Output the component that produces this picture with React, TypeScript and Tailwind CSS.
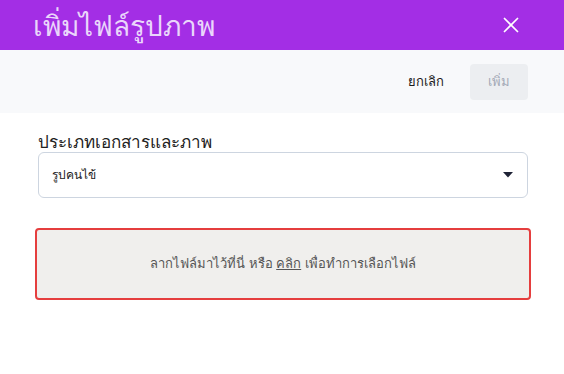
import { X } from "lucide-react";

export default function App() {
  return (
    <div className="flex h-[374px] w-[564px] flex-col bg-white font-['Noto_Sans',sans-serif]">
      {/* Header */}
      <div className="flex h-[50px] items-center justify-between bg-[#a32ee5] pl-[33px] pr-[40px]">
        <h1 className="text-[28px] leading-none text-[#ead6fb]">เพิ่มไฟล์รูปภาพ</h1>
        <X className="h-[26px] w-[26px] text-white" strokeWidth={1.6} />
      </div>

      {/* Actions bar */}
      <div className="flex h-[63px] items-center justify-end gap-[26px] bg-[#f8f9fb] pr-[36px]">
        <button className="text-[13px] font-medium text-[#1a1a1a]">ยกเลิก</button>
        <button className="flex h-[36px] w-[58px] items-center justify-center rounded-[4px] bg-[#eceef1] text-[13px] font-medium text-[#a3a9b6]">
          เพิ่ม
        </button>
      </div>

      {/* Form */}
      <div className="px-[36px] pt-[18px]">
        <div className="pl-[2px]">
          <label className="block text-[17px] leading-[22px] text-[#222]">ประเภทเอกสารและภาพ</label>
          <div className="-mt-[1px] flex h-[46px] w-[490px] items-center justify-between rounded-[6px] border border-[#cdd5e0] pl-[13px] pr-[14px]">
            <span className="text-[12px] text-[#222]">รูปคนไข้</span>
            <svg width="10" height="6" viewBox="0 0 10 6">
              <path d="M0 0h10L5 5.5z" fill="#1e2235" />
            </svg>
          </div>
        </div>

        <div className="-ml-[1px] mt-[30px] flex h-[72px] w-[496px] items-center justify-center rounded-[4px] border-2 border-[#e53e3e] bg-[#f0efed]">
          <p className="text-[13px] font-medium text-[#555]">
            ลากไฟล์มาไว้ที่นี่ หรือ <span className="underline">คลิก</span> เพื่อทำการเลือกไฟล์
          </p>
        </div>
      </div>
    </div>
  );
}
